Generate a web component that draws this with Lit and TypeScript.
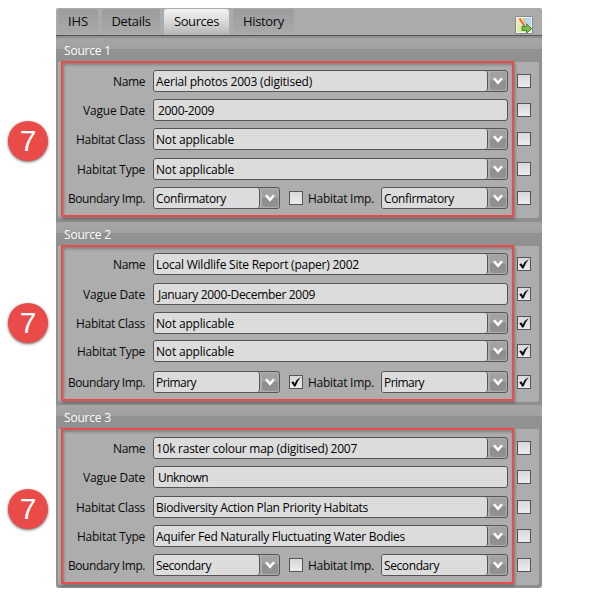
import { LitElement, html, svg, css } from "lit";
import { customElement, property } from "lit/decorators.js";
import { styleMap } from "lit/directives/style-map.js";
import { classMap } from "lit/directives/class-map.js";

interface Source {
  title: string;
  name: [string, number];
  date: [string, number];
  cls: [string, number];
  type: [string, number];
  importance: [string, number];
  checked: boolean;
  top: number;
  gaps: number[];
}

const SOURCES: Source[] = [
  {
    title: "Source 1",
    name: ["Aerial photos 2003 (digitised)", 156],
    date: ["2000-2009", 56],
    cls: ["Not applicable", 78],
    type: ["Not applicable", 78],
    importance: ["Confirmatory", 70],
    checked: false,
    top: 8,
    gaps: [0, 7, 7, 8, 7],
  },
  {
    title: "Source 2",
    name: ["Local Wildlife Site Report (paper) 2002", 203],
    date: ["January 2000-December 2009", 157],
    cls: ["Not applicable", 78],
    type: ["Not applicable", 78],
    importance: ["Primary", 40],
    checked: true,
    top: 7,
    gaps: [0, 8, 7, 6, 9],
  },
  {
    title: "Source 3",
    name: ["10k raster colour map (digitised) 2007", 201],
    date: ["Unknown", 50],
    cls: ["Biodiversity Action Plan Priority Habitats", 212],
    type: ["Aquifer Fed Naturally Fluctuating Water Bodies", 249],
    importance: ["Secondary", 55],
    checked: false,
    top: 8,
    gaps: [0, 7, 8, 7, 7],
  },
];

/** Text whose tracking is adjusted so that it spans a given width. */
@customElement("fit-text")
export class FitText extends LitElement {
  @property() text = "";
  @property({ type: Number }) span = 0;
  static styles = css`
    :host { display: inline-block; white-space: pre; }
    .t { display: inline-block; }
  `;
  updated() {
    const el = this.renderRoot.querySelector<HTMLElement>(".t");
    if (!el || !this.span) return;
    el.style.letterSpacing = "0px";
    const natural = el.getBoundingClientRect().width;
    el.style.letterSpacing = `${(this.span - natural) / this.text.length}px`;
  }
  render() {
    return html`<span class="t">${this.text}</span>`;
  }
}

const fit = (t: string, w: number) => html`<fit-text .text=${t} .span=${w}></fit-text>`;

@customElement("check-box")
export class CheckBox extends LitElement {
  @property({ type: Boolean }) checked = false;
  static styles = css`
    :host { display: block; width: 14px; height: 14px; flex: none; }
    .box {
      box-sizing: border-box; width: 14px; height: 14px;
      border: 1px solid #555; background: linear-gradient(#d8d8d8, #ececec);
    }
    svg { display: block; width: 12px; height: 12px; }
  `;
  render() {
    return html`<div class="box">${this.checked
      ? html`<svg viewBox="0 0 12 12">${svg`<path d="M1.2 6.4 L3.2 5.2 L4.7 7.4 Q6.8 2.8 10.8 .9 Q7.4 5 5.5 10.4 L4 10.4 Q3 7.8 1.2 6.4Z" fill="#0a0a0a"/>`}</svg>`
      : ""}</div>`;
  }
}

@customElement("combo-box")
export class ComboBox extends LitElement {
  @property() value = "";
  @property({ type: Number }) span = 0;
  @property({ type: Boolean }) plain = false;
  static styles = css`
    :host { display: block; height: 22px; min-width: 0; }
    .box {
      box-sizing: border-box; height: 22px; display: flex;
      border: 1px solid #555; border-radius: 3px; background: #adadad;
    }
    .value {
      flex: 1; background: #dcdcdc; border-right: 1px solid #555;
      border-radius: 2px 3px 3px 2px; padding-left: 2px; line-height: 22px; color: #000;
    }
    .plain { padding-left: 4px; border-right: 0; }
    .arrow {
      width: 16px; margin: 1px 1px 1px 2px; border-radius: 2px;
      background: linear-gradient(#a2a2a2 0 45%, #8d8d8d 50%, #929292);
      display: flex;
    }
    svg { width: 16px; height: 18px; }
  `;
  render() {
    return html`<div class="box">
      <div class=${classMap({ value: true, plain: this.plain })}>${fit(this.value, this.span)}</div>
      ${this.plain ? "" : html`<div class="arrow"><svg viewBox="0 0 16 18">
        <path d="M4 6.2 L8 10.8 L12 6.2" fill="none" stroke="#fff" stroke-width="2.4"/></svg></div>`}
    </div>`;
  }
}

@customElement("source-group")
export class SourceGroup extends LitElement {
  @property({ attribute: false }) source!: Source;
  static styles = css`
    :host { display: block; }
    .head {
      box-sizing: border-box; height: 24px; padding-left: 8px; line-height: 26px; color: #fff;
      border-radius: 3px 3px 0 0;
      background: linear-gradient(#a5a5a5 0, #a1a1a1 11px, #919191 11px, #919191);
    }
    .body {
      box-sizing: border-box; height: 156px; margin: 0 3px 0 2px;
      background: #adadad; border-radius: 0 0 3px 3px;
    }
    .row {
      height: 22px; display: grid; align-items: center;
      grid-template-columns: 87px 8px 355px 9px 14px;
    }
    .label { justify-self: end; padding-top: 2px; line-height: 16px; }
    .pair {
      display: grid; align-items: center;
      grid-template-columns: 127px 9px 14px 5px 66px 7px 127px;
    }
  `;
  private row(i: number, label: string, w: number, content: unknown) {
    return html`<div class="row" style=${styleMap({ marginTop: `${this.source.gaps[i]}px` })}>
      <div class="label">${fit(label, w)}</div><i></i><div>${content}</div><i></i>
      <check-box .checked=${this.source.checked}></check-box>
    </div>`;
  }
  render() {
    const s = this.source;
    const combo = (v: [string, number], plain = false) =>
      html`<combo-box .value=${v[0]} .span=${v[1]} .plain=${plain}></combo-box>`;
    return html`
      <div class="head">${fit(s.title, 47)}</div>
      <div class="body" style=${styleMap({ paddingTop: `${s.top}px` })}>
        ${this.row(0, "Name", 32, combo(s.name))}
        ${this.row(1, "Vague Date", 62, combo(s.date, true))}
        ${this.row(2, "Habitat Class", 69, combo(s.cls))}
        ${this.row(3, "Habitat Type", 68, combo(s.type))}
        ${this.row(4, "Boundary Imp.", 77, html`<div class="pair">
          ${combo(s.importance)}<i></i><check-box .checked=${s.checked}></check-box><i></i>
          <div class="label">${fit("Habitat Imp.", 66)}</div><i></i>${combo(s.importance)}
        </div>`)}
      </div>`;
  }
}

@customElement("app-root")
export class AppRoot extends LitElement {
  static styles = css`
    :host {
      display: block; position: relative; width: 604px; height: 597px; overflow: hidden;
      background: #fff; font: 12px/16px "Open Sans", "Noto Sans", sans-serif; color: #0a0a0a;
    }
    .panel {
      box-sizing: border-box; width: 486px; height: 580px; margin: 0 0 0 56px;
      background: #8f8f8f; border-radius: 3px;
    }
    .top { height: 8px; }
    .tabs {
      box-sizing: border-box; height: 28px; display: flex; gap: 4px; padding: 1px 9px 0 2px;
      background: #ababab; border-bottom: 1px solid #555; border-radius: 3px 3px 0 0; font-size: 13px;
    }
    .tab {
      height: 25px; line-height: 25px; text-align: center; border-radius: 3px 3px 0 0;
      background: linear-gradient(#9c9c9c, #a9a9a9);
    }
    .on { background: linear-gradient(#f2f2f2, #dcdcdc 45%, #b4b4b4); height: 26px; }
    .tool { margin: 7px 0 0 auto; width: 18px; height: 18px; }
    .groups { display: flex; flex-direction: column; padding-top: 2px; background: #8f8f8f; }
    .group { position: relative; }
    .outline {
      position: absolute; left: 5px; top: 23px; box-sizing: border-box; width: 453px; height: 156px;
      border: 2px solid #ea4a48; box-shadow: 1px 2px 3px #0005, inset 1px 2px 3px #0004;
    }
    .badge {
      position: absolute; left: 8px; width: 40px; height: 40px; border-radius: 50%;
      background: #ea4a48; color: #fff; text-align: center; box-shadow: 0 1px 3px #0009;
      font: 30px/39px "Liberation Sans", Arial, sans-serif;
    }
  `;
  render() {
    const tabs: [string, number, number][] = [["IHS", 40, 20], ["Details", 58, 39], ["Sources", 65, 45], ["History", 61, 41]];
    return html`
      <div class="top"></div>
      <div class="panel">
        <div class="tabs">
          ${tabs.map(([t, w, s]) => html`<div class=${classMap({ tab: true, on: t === "Sources" })}
            style=${styleMap({ width: `${w}px` })}>${fit(t, s)}</div>`)}
          <svg class="tool" viewBox="0 0 18 18">
            <rect x=".5" y=".5" width="17" height="17" rx="1" fill="#8a8a8a" stroke="#8a8a8a"/>
            <rect x="1" y="1" width="16" height="16" fill="#f2f2ee"/>
            <rect x="2" y="2" width="7" height="14" fill="#f3ea9c"/>
            <rect x="9" y="2" width="7" height="7" fill="#a6d2ee"/>
            <path d="M2 8h7v8H2z" fill="#dfe9a0"/><path d="M9 9h7v7H9z" fill="#d5e8c8"/>
            <path d="M4 2v14M7 2v14M11 2v14M14 2v14M2 5h14M2 8h14" stroke="#fff" stroke-opacity=".35" stroke-width=".7"/>
            <path d="M4.5 2.5l5 7.5" stroke="#e05a3c" stroke-width="1.7"/><path d="M8 2.5l2.5 5" stroke="#f0a94a"/>
            <path d="M7 10.5h4.5V8l5.3 4.6-5.3 4.4v-2.6H7z" fill="#7dbb52" stroke="#3f8a2a" stroke-width="1"/>
          </svg>
        </div>
        <div class="groups">
          ${SOURCES.map((s, i) => html`<div class="group" style=${styleMap({ marginTop: `${[0, 4, 3][i]}px` })}>
            <source-group .source=${s}></source-group><div class="outline"></div></div>`)}
        </div>
      </div>
      ${[121, 303, 489].map((y) => html`<div class="badge" style=${styleMap({ top: `${y}px` })}>7</div>`)}
    `;
  }
}
